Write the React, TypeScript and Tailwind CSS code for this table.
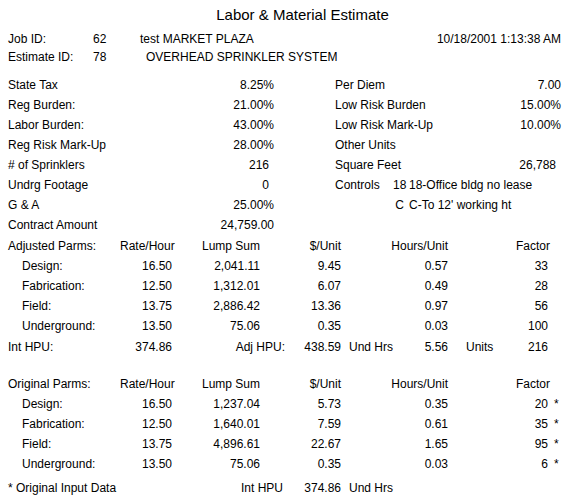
const leftParms = [
  { label: "State Tax", value: "8.25%", pr: "" },
  { label: "Reg Burden:", value: "21.00%", pr: "" },
  { label: "Labor Burden:", value: "43.00%", pr: "" },
  { label: "Reg Risk Mark-Up", value: "28.00%", pr: "" },
  { label: "# of Sprinklers", value: "216", pr: "pr-[5px]" },
  { label: "Undrg Footage", value: "0", pr: "pr-[5px]" },
  { label: "G & A", value: "25.00%", pr: "" },
  { label: "Contract Amount", value: "24,759.00", pr: "" },
]

const rightParms = [
  { label: "Per Diem", value: "7.00", pr: "" },
  { label: "Low Risk Burden", value: "15.00%", pr: "" },
  { label: "Low Risk Mark-Up", value: "10.00%", pr: "" },
  { label: "Other Units", value: "", pr: "" },
  { label: "Square Feet", value: "26,788", pr: "pr-[5px]" },
]

const adjusted = [
  ["Design:", "16.50", "2,041.11", "9.45", "0.57", "33"],
  ["Fabrication:", "12.50", "1,312.01", "6.07", "0.49", "28"],
  ["Field:", "13.75", "2,886.42", "13.36", "0.97", "56"],
  ["Underground:", "13.50", "75.06", "0.35", "0.03", "100"],
]

const original = [
  ["Design:", "16.50", "1,237.04", "5.73", "0.35", "20"],
  ["Fabrication:", "12.50", "1,640.01", "7.59", "0.61", "35"],
  ["Field:", "13.75", "4,896.61", "22.67", "1.65", "95"],
  ["Underground:", "13.50", "75.06", "0.35", "0.03", "6"],
]

function ParmsHeader({ title }: { title: string }) {
  return (
    <div className="flex h-5 items-center">
      <div className="w-[112px]">{title}</div>
      <div className="w-[52px] text-right">Rate/Hour</div>
      <div className="w-[88px] text-right">Lump Sum</div>
      <div className="w-[81px] text-right">$/Unit</div>
      <div className="w-[107px] text-right">Hours/Unit</div>
      <div className="w-[102px] text-right">Factor</div>
    </div>
  )
}

function ParmsRows({ rows, starred }: { rows: string[][]; starred?: boolean }) {
  return (
    <>
      {rows.map((r) => (
        <div key={r[0]} className="flex h-5 items-center">
          <div className="w-[112px] pl-[14px]">{r[0]}</div>
          <div className="w-[52px] text-right">{r[1]}</div>
          <div className="w-[88px] text-right">{r[2]}</div>
          <div className="w-[81px] text-right">{r[3]}</div>
          <div className="w-[107px] text-right">{r[4]}</div>
          <div className="w-[100px] text-right">{r[5]}</div>
          {starred ? <div className="pl-[6px]">*</div> : null}
        </div>
      ))}
    </>
  )
}

export default function App() {
  return (
    <div className="h-[500px] w-[570px] overflow-hidden bg-white pl-2 pr-[9px] text-[12px] text-black [font-family:'Liberation_Sans',Arial,sans-serif]">
      <div className="flex h-[30px] items-center justify-center pl-[36px] text-[15px]">Labor &amp; Material Estimate</div>

      <div className="flex h-[18px] items-center">
        <div className="w-[85px]">Job ID:</div>
        <div className="w-[47px]">62</div>
        <div className="flex-1">test MARKET PLAZA</div>
        <div>10/18/2001 1:13:38 AM</div>
      </div>
      <div className="flex h-[18px] items-center">
        <div className="w-[85px]">Estimate ID:</div>
        <div className="w-[47px]">78</div>
        <div className="flex-1 pl-[6px]">OVERHEAD SPRINKLER SYSTEM</div>
      </div>

      <div className="mt-[9px] flex">
        <div className="w-[266px]">
          {leftParms.map((p) => (
            <div key={p.label} className="flex h-5 items-center justify-between">
              <span>{p.label}</span>
              <span className={p.pr}>{p.value}</span>
            </div>
          ))}
        </div>
        <div className="ml-[61px] w-[226px]">
          {rightParms.map((p) => (
            <div key={p.label} className="flex h-5 items-center justify-between">
              <span>{p.label}</span>
              <span className={p.pr}>{p.value}</span>
            </div>
          ))}
          <div className="flex h-5 items-center">
            <span className="w-[58px]">Controls</span>
            <span className="w-[11px] text-right">18</span>
            <span className="pl-[5px]">18-Office bldg no lease</span>
          </div>
          <div className="flex h-5 items-center">
            <span className="w-[69px] text-right">C</span>
            <span className="pl-[5px]">C-To 12' working ht</span>
          </div>
        </div>
      </div>

      <div className="mt-px">
        <ParmsHeader title="Adjusted Parms:" />
        <ParmsRows rows={adjusted} />
        <div className="mt-px flex h-5 items-center">
          <div className="w-[112px]">Int HPU:</div>
          <div className="w-[52px] text-right">374.86</div>
          <div className="w-[113px] text-right">Adj HPU:</div>
          <div className="w-[56px] text-right">438.59</div>
          <div className="flex w-[107px] justify-between pl-2">
            <span>Und Hrs</span>
            <span>5.56</span>
          </div>
          <div className="flex w-[100px] justify-between pl-[18px]">
            <span>Units</span>
            <span>216</span>
          </div>
        </div>
      </div>

      <div className="mt-[17px]">
        <ParmsHeader title="Original Parms:" />
        <ParmsRows rows={original} starred />
        <div className="mt-1 flex h-5 items-center">
          <div className="w-[164px]">* Original Input Data</div>
          <div className="w-[111px] text-right">Int HPU</div>
          <div className="w-[58px] text-right">374.86</div>
          <div className="pl-2">Und Hrs</div>
        </div>
      </div>
    </div>
  )
}
